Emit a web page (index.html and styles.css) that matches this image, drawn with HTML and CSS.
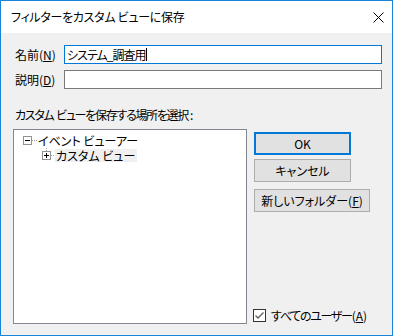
FILE: index.html
```html
<!DOCTYPE html>
<html lang="ja">
<head>
    <meta charset="UTF-8">
    <title>フィルターをカスタム ビューに保存</title>
    <link rel="stylesheet" href="styles.css">
</head>
<body>
    <div class="window">
        <div class="titlebar">
            <span class="title">フィルターをカスタム ビューに保存</span>
            <button class="close" aria-label="閉じる">
                <svg width="11" height="11" viewBox="0 0 11 11">
                    <path d="M0.5 0.5 L10.5 10.5 M10.5 0.5 L0.5 10.5" stroke="#000" stroke-width="1" fill="none"/>
                </svg>
            </button>
        </div>

        <div class="content">
            <div class="field">
                <label>名前(<u>N</u>)</label>
                <div class="text-box focused"><span class="value">システム_調査用</span><span class="caret"></span></div>
            </div>
            <div class="field">
                <label>説明(<u>D</u>)</label>
                <div class="text-box"></div>
            </div>

            <p class="section-label"><span class="tight">カスタム</span> <span class="tight">ビューを保存する場所を選択</span><span class="colon">:</span></p>

            <div class="main">
                <div class="tree">
                    <div class="tree-row">
                        <svg class="expander" width="14" height="15" viewBox="0 0 14 15">
                            <rect x="0.5" y="3.5" width="8" height="8" fill="#fff" stroke="#919191"/>
                            <path d="M2 7.5 H7" stroke="#000"/>
                            <path d="M9 7.5 H14" stroke="#a0a0a0" stroke-dasharray="1 1"/>
                        </svg>
                        <span class="node">イベント ビューアー</span>
                    </div>
                    <div class="tree-row child">
                        <svg class="expander" width="14" height="15" viewBox="0 0 14 15">
                            <path d="M4.5 0 V3" stroke="#a0a0a0" stroke-dasharray="1 1"/>
                            <rect x="0.5" y="3.5" width="8" height="8" fill="#fff" stroke="#919191"/>
                            <path d="M2 7.5 H7 M4.5 5 V10" stroke="#000"/>
                            <path d="M9 7.5 H14" stroke="#a0a0a0" stroke-dasharray="1 1"/>
                        </svg>
                        <span class="node selected">カスタム ビュー</span>
                    </div>
                </div>

                <div class="side">
                    <button class="btn default">OK</button>
                    <button class="btn">キャンセル</button>
                    <button class="btn wide">新しいフォルダー(<u>F</u>)</button>

                    <label class="check-row">
                        <span class="checkbox">
                            <svg width="11" height="11" viewBox="0 0 11 11">
                                <path d="M1.5 5.5 L4 8 L9.5 2.5" stroke="#5c5c5c" stroke-width="1.3" fill="none"/>
                            </svg>
                        </span>
                        <span class="check-label"><span class="tight">すべてのユーザー</span>(<u>A</u>)</span>
                    </label>
                </div>
            </div>
        </div>
    </div>
</body>
</html>
```

FILE: styles.css
```css
body {
    margin: 0;
    font-family: "Noto Sans CJK JP", "Noto Sans", sans-serif;
    font-size: 12px;
    font-feature-settings: "palt";
    color: #000;
}

.window {
    width: 393px;
    height: 336px;
    box-sizing: border-box;
    border: 1px solid #1883d7;
    display: flex;
    flex-direction: column;
}

.titlebar {
    height: 32px;
    background-color: #fff;
    display: flex;
    align-items: center;
    justify-content: space-between;
    padding-left: 10px;
}

.title {
    line-height: 16px;
    margin-top: -1px;
    letter-spacing: -0.3px;
}

.close {
    width: 28px;
    height: 32px;
    border: none;
    background: none;
    padding: 0;
    display: flex;
    align-items: center;
    justify-content: center;
}

.content {
    flex: 1;
    background-color: #f0f0f0;
    padding: 12px 10px 11px 12px;
    display: flex;
    flex-direction: column;
}

.field {
    display: flex;
    align-items: center;
    height: 19px;
    margin-bottom: 6px;
}

.field label {
    width: 49px;
    padding-left: 2px;
    line-height: 16px;
}

.text-box {
    flex: 1;
    height: 19px;
    box-sizing: border-box;
    border: 1px solid #7a7a7a;
    background-color: #fff;
    padding-left: 2px;
    line-height: 15px;
    display: flex;
    align-items: center;
}

.text-box.focused {
    border-color: #0078d7;
}

.value {
    letter-spacing: -1px;
}

.caret {
    width: 1px;
    height: 13px;
    background-color: #000;
    margin-left: 1px;
}

.section-label {
    margin: 12px 0 6px 2px;
    line-height: 16px;
}

.tight {
    letter-spacing: -1.3px;
}

.colon {
    padding-left: 2px;
}

.main {
    flex: 1;
    display: flex;
}

.tree {
    width: 234px;
    flex: none;
    box-sizing: border-box;
    border: 1px solid #828790;
    background-color: #fff;
    padding: 3px 0 0 9px;
}

.tree-row {
    height: 15px;
    display: flex;
    align-items: center;
    overflow: hidden;
}

.tree-row.child {
    padding-left: 19px;
}

.node {
    line-height: 13px;
    padding: 0 2px 0 1px;
}

.node.selected {
    background-color: #f0f0f0;
    padding-left: 1px;
    margin-left: -1px;
}

.side {
    flex: 1;
    margin-left: 7px;
    display: flex;
    flex-direction: column;
    align-items: flex-start;
}

.btn {
    width: 97px;
    height: 23px;
    box-sizing: border-box;
    border: 1px solid #adadad;
    background-color: #e1e1e1;
    font-family: inherit;
    font-size: 12px;
    font-feature-settings: "palt";
    color: #000;
    padding: 0;
    margin-bottom: 4px;
}

.btn.default {
    border: 2px solid #0078d7;
    margin-top: 3px;
}

.btn.wide {
    width: 116px;
    margin-top: 3px;
}

.check-row {
    margin-top: auto;
    margin-bottom: 1px;
    display: flex;
    align-items: center;
    height: 16px;
    margin-left: -1px;
}

.checkbox {
    width: 13px;
    height: 13px;
    box-sizing: border-box;
    border: 1px solid #333;
    background-color: #fff;
    margin-right: 5px;
    display: flex;
    align-items: center;
    justify-content: center;
}

.check-label u {
    letter-spacing: 0;
}
```
